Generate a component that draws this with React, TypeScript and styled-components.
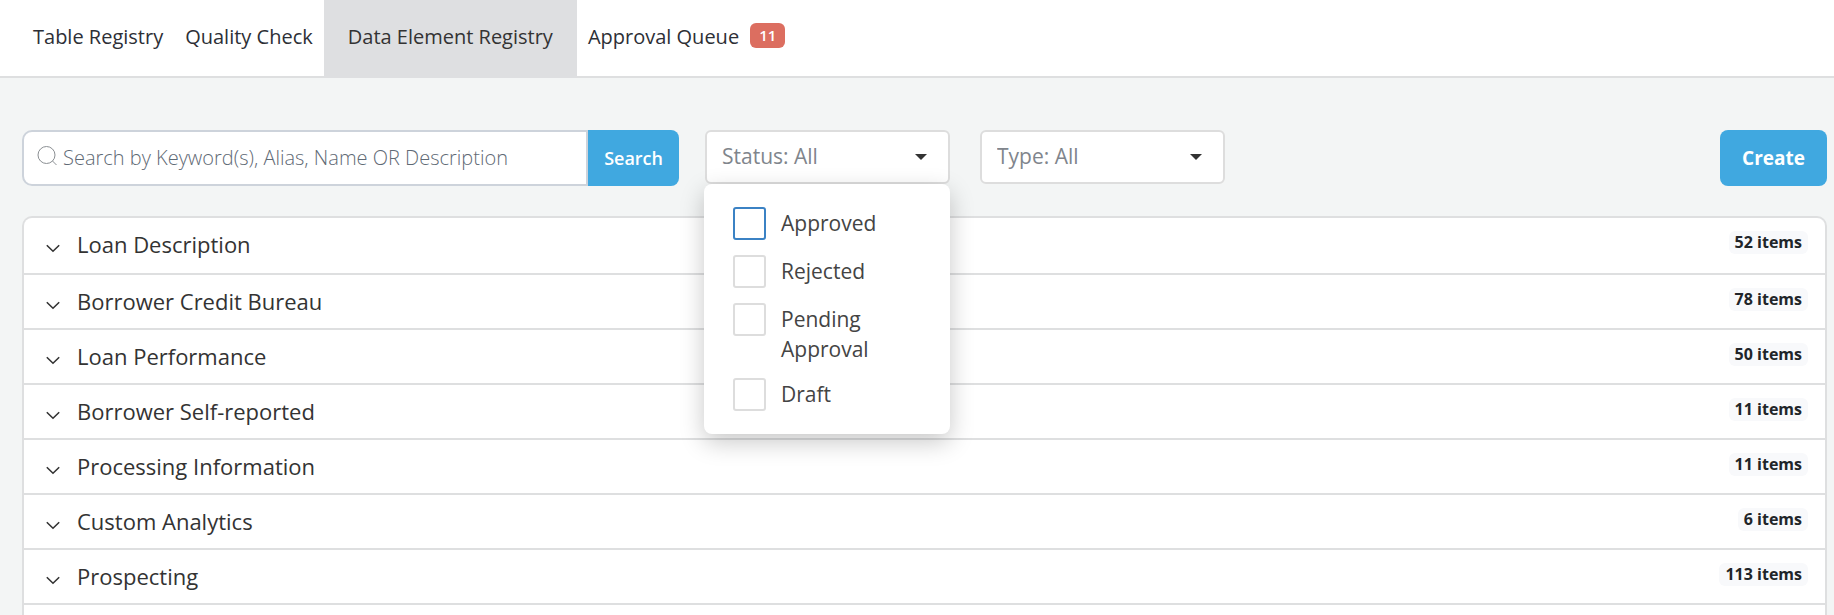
import React, { useState } from "react";
import styled, { createGlobalStyle } from "styled-components";

const GlobalStyle = createGlobalStyle`
  *, *::before, *::after { box-sizing: border-box; }
  body {
    margin: 0;
    background: #f3f5f5;
    color: #333333;
    font-family: "Open Sans", "Noto Sans", sans-serif;
    font-size: 20px;
    line-height: 30px;
  }
  button, input, select { font: inherit; color: inherit; }
  button { cursor: pointer; }
`;

const Page = styled.div`
  display: flex;
  flex-direction: column;
  min-height: 100vh;
`;

const Tabs = styled.nav`
  display: flex;
  height: 78px;
  padding-left: 22px;
  background: #ffffff;
  border-bottom: 2px solid #dedfe0;
`;

const Tab = styled.a<{ $active?: boolean }>`
  display: flex;
  align-items: center;
  height: 78px;
  padding: 0 ${(p) => (p.$active ? 24 : 11)}px 4px;
  background: ${(p) => (p.$active ? "#dedfe1" : "transparent")};
  color: ${(p) => (p.$active ? "#333333" : "#2d2f36")};
  font-size: 20px;
  font-weight: 500;
  text-decoration: none;
`;

const CountBadge = styled.span`
  margin: 0 0 3px 11px;
  padding: 0 9px;
  border-radius: 6px;
  background: #dc6e60;
  color: #ffffff;
  font-size: 15px;
  font-weight: 600;
  line-height: 25px;
`;

const Main = styled.main`
  display: flex;
  flex: 1;
  flex-direction: column;
  gap: 30px;
  padding: 52px 7px 0 22px;
`;

const Toolbar = styled.div`
  display: flex;
  align-items: flex-start;
`;

const SearchForm = styled.form`
  display: flex;
  flex: 0 1 657px;
  height: 56px;
  margin-right: 26px;
`;

const SearchField = styled.label`
  display: flex;
  flex: 1;
  min-width: 0;
  padding-left: 13px;
  background: #ffffff;
  border: 2px solid #cdd3db;
  border-radius: 10px 0 0 10px;

  svg { flex: none; margin-top: 14px; }
`;

const SearchInput = styled.input`
  flex: 1;
  min-width: 0;
  padding: 0 6px;
  border: 0;
  outline: 0;
  background: transparent;
  font-size: 20px;

  &::placeholder { color: #5f6a75; font-weight: 300; opacity: 1; }
`;

const PrimaryButton = styled.button<{ $joined?: boolean }>`
  height: 56px;
  padding: 0 ${(p) => (p.$joined ? 16 : 22)}px;
  border: 0;
  border-radius: ${(p) => (p.$joined ? "0 8px 8px 0" : "8px")};
  background: #40a8e0;
  color: #ffffff;
  font-size: ${(p) => (p.$joined ? 18 : 19)}px;
  font-weight: ${(p) => (p.$joined ? 600 : 700)};
`;

const Filter = styled.div`
  position: relative;
  flex: 0 1 245px;
  margin-right: 30px;
`;

const filterBox = `
  display: block;
  width: 100%;
  height: 54px;
  padding: 0 15px 2px;
  border: 2px solid #dddddd;
  border-radius: 6px;
  background: #ffffff;
  color: #80858c;
  font-size: 21px;
  line-height: 30px;
  text-align: left;
`;

const FilterButton = styled.button`${filterBox}`;
const FilterSelect = styled.select`
  ${filterBox}
  appearance: none;
`;

const Caret = styled.svg`
  position: absolute;
  top: 24px;
  right: 23px;
  pointer-events: none;
`;

const Menu = styled.div`
  position: absolute;
  z-index: 2;
  top: 54px;
  left: -1px;
  right: 0;
  display: flex;
  flex-direction: column;
  gap: 15px;
  padding: 23px 29px;
  border-radius: 8px;
  background: #ffffff;
  box-shadow: 0 8px 24px rgba(0, 0, 0, 0.22);
`;

const Option = styled.label`
  display: flex;
  align-items: flex-start;
  gap: 15px;
`;

const OptionText = styled.span`
  padding-top: 1px;
  margin-bottom: -1px;
  color: #444444;
  font-size: 21px;
  line-height: 30px;
`;

const Checkbox = styled.input`
  flex: none;
  appearance: none;
  width: 33px;
  height: 33px;
  margin: 0;
  border: 2px solid #dddddd;
  border-radius: 3px;
  background: #ffffff;
  outline: 0;

  &:focus { border-color: #3b82c4; }
  &:checked { background: #40a8e0; }
`;

const Spacer = styled.div`
  flex: 1;
`;

const Categories = styled.section`
  flex: 1;
  background: #ffffff;
  border: 2px solid #dedfe0;
  border-bottom: 0;
  border-radius: 10px 10px 0 0;
`;

const Category = styled.button`
  display: flex;
  align-items: flex-start;
  width: 100%;
  height: 55px;
  padding: 13px 17px 0 22px;
  border: 0;
  border-bottom: 2px solid #dedfe0;
  background: transparent;
  text-align: left;

  &:first-child { height: 57px; }
  svg { margin-top: 13px; }
`;

const CategoryName = styled.span`
  flex: 1;
  padding-left: 17px;
  font-size: 22px;
  font-weight: 500;
  line-height: 26px;
`;

const ItemCount = styled.span`
  padding: 0 6px 1px;
  border-radius: 6px;
  background: #f8f9fb;
  color: #212529;
  font-size: 16px;
  font-weight: 700;
  line-height: 22px;
`;

const categories = [
  { name: "Loan Description", count: 52 },
  { name: "Borrower Credit Bureau", count: 78 },
  { name: "Loan Performance", count: 50 },
  { name: "Borrower Self-reported", count: 11 },
  { name: "Processing Information", count: 11 },
  { name: "Custom Analytics", count: 6 },
  { name: "Prospecting", count: 113 },
];

const statuses = ["Approved", "Rejected", "Pending Approval", "Draft"];

const CaretIcon = () => (
  <Caret width="12" height="6" viewBox="0 0 12 6" aria-hidden="true">
    <path d="M0 0h12L6 6z" fill="#333333" />
  </Caret>
);

export default function App() {
  const [open, setOpen] = useState(true);

  return (
    <Page>
      <GlobalStyle />
      <Tabs>
        <Tab href="#tables">Table Registry</Tab>
        <Tab href="#quality">Quality Check</Tab>
        <Tab href="#elements" $active aria-current="page">Data Element Registry</Tab>
        <Tab href="#approvals">
          Approval Queue <CountBadge>11</CountBadge>
        </Tab>
      </Tabs>
      <Main>
        <Toolbar>
          <SearchForm onSubmit={(e) => e.preventDefault()}>
            <SearchField>
              <svg width="20" height="20" viewBox="0 0 20 20" fill="none" stroke="#8b8f93" strokeWidth="1" aria-hidden="true">
                <circle cx="9.5" cy="9" r="8.5" />
                <path d="M15.5 15l4 4" />
              </svg>
              <SearchInput type="text" aria-label="Search" placeholder="Search by Keyword(s), Alias, Name OR Description" />
            </SearchField>
            <PrimaryButton type="submit" $joined>Search</PrimaryButton>
          </SearchForm>
          <Filter>
            <FilterButton type="button" aria-expanded={open} onClick={() => setOpen(!open)}>
              Status: All
            </FilterButton>
            <CaretIcon />
            {open && (
              <Menu>
                {statuses.map((status, i) => (
                  <Option key={status}>
                    <Checkbox type="checkbox" autoFocus={i === 0} />
                    <OptionText>{status}</OptionText>
                  </Option>
                ))}
              </Menu>
            )}
          </Filter>
          <Filter>
            <FilterSelect aria-label="Type">
              <option>Type: All</option>
            </FilterSelect>
            <CaretIcon />
          </Filter>
          <Spacer />
          <PrimaryButton type="button">Create</PrimaryButton>
        </Toolbar>
        <Categories>
          {categories.map(({ name, count }) => (
            <Category key={name} type="button" aria-expanded={false}>
              <svg width="14" height="9" viewBox="0 0 14 9" fill="none" stroke="#333333" strokeWidth="1.6" aria-hidden="true">
                <path d="M0.8 1.2L7 7.2L13.2 1.2" />
              </svg>
              <CategoryName>{name}</CategoryName>
              <ItemCount>{count} items</ItemCount>
            </Category>
          ))}
        </Categories>
      </Main>
    </Page>
  );
}
